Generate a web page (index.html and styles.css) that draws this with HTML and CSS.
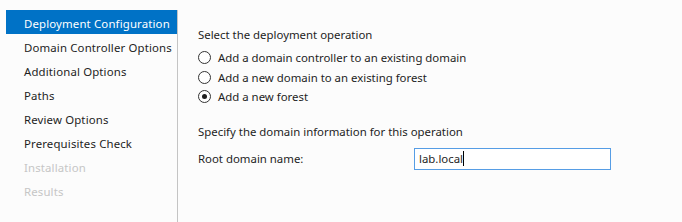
FILE: index.html
```html
<!DOCTYPE html>
<html lang="en">
<head>
  <meta charset="UTF-8">
  <title>Deployment Configuration</title>
  <link rel="stylesheet" href="styles.css">
</head>
<body>
  <div class="wizard">
    <!-- Steps -->
    <ul class="steps">
      <li class="active">Deployment Configuration</li>
      <li>Domain Controller Options</li>
      <li>Additional Options</li>
      <li>Paths</li>
      <li>Review Options</li>
      <li>Prerequisites Check</li>
      <li class="disabled">Installation</li>
      <li class="disabled">Results</li>
    </ul>

    <!-- Page content -->
    <div class="content">
      <div class="section-title">Select the deployment operation</div>
      <div class="options">
        <label class="option"><span class="radio"></span>Add a domain controller to an existing domain</label>
        <label class="option"><span class="radio"></span>Add a new domain to an existing forest</label>
        <label class="option"><span class="radio checked"></span>Add a new forest</label>
      </div>

      <div class="section-title second">Specify the domain information for this operation</div>
      <div class="field">
        <span class="field-label">Root domain name:</span>
        <div class="textbox">lab.local<span class="caret"></span></div>
      </div>
    </div>
  </div>
</body>
</html>
```

FILE: styles.css
```css
body {
  margin: 0;
  background: #fcfcfc;
  font-family: "Noto Sans", "Open Sans", sans-serif;
  font-size: 11.4px;
  color: #1e1e1e;
}

.wizard {
  display: flex;
  height: 222px;
}

/* Left step list */
.steps {
  list-style: none;
  margin: 10px 0 0 6px;
  padding: 0;
  width: 171px;
  border-right: 1px solid #c4c4c4;
}

.steps li {
  height: 24px;
  line-height: 24px;
  padding: 2px 0 0 18px;
  box-sizing: border-box;
  white-space: nowrap;
  letter-spacing: 0.15px;
}

.steps li.active {
  background: #0072c6;
  color: #fff;
}

.steps li.disabled {
  color: #c6c6c6;
}

/* Right side */
.content {
  padding: 27px 0 0 20px;
}

.section-title {
  line-height: 16px;
}

.section-title.second {
  margin-top: 17px;
}

.options {
  margin-top: 5px;
}

.option {
  display: flex;
  align-items: center;
  height: 19.5px;
}

.radio {
  width: 11px;
  height: 11px;
  border: 1px solid #333;
  border-radius: 50%;
  background: #fff;
  margin-right: 7px;
  position: relative;
}

.radio.checked::after {
  content: "";
  position: absolute;
  left: 3px;
  top: 3px;
  width: 5px;
  height: 5px;
  border-radius: 50%;
  background: #1e1e1e;
}

.field {
  display: flex;
  align-items: center;
  margin-top: 8px;
}

.field-label {
  width: 216px;
}

.textbox {
  width: 191px;
  height: 20px;
  padding-left: 4px;
  border: 1px solid #569de5;
  background: #fff;
  display: flex;
  align-items: center;
}

.caret {
  display: inline-block;
  width: 1px;
  height: 15px;
  background: #000;
}
```
